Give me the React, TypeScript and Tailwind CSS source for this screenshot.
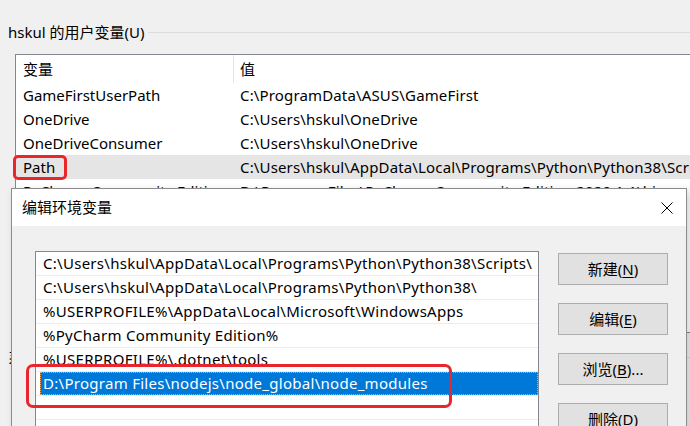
import React from 'react';

const userVars: [string, string][] = [
  ['GameFirstUserPath', 'C:\\ProgramData\\ASUS\\GameFirst'],
  ['OneDrive', 'C:\\Users\\hskul\\OneDrive'],
  ['OneDriveConsumer', 'C:\\Users\\hskul\\OneDrive'],
  ['Path', 'C:\\Users\\hskul\\AppData\\Local\\Programs\\Python\\Python38\\Scripts\\;C:\\Users\\hskul\\AppData\\Local\\Programs\\Python\\Python38\\'],
  ['PyCharm Community Edition', 'D:\\Program Files\\PyCharm Community Edition 2020.1.1\\bin;'],
  ['TEMP', 'C:\\Users\\hskul\\AppData\\Local\\Temp'],
  ['TMP', 'C:\\Users\\hskul\\AppData\\Local\\Temp'],
];

const pathEntries = [
  'C:\\Users\\hskul\\AppData\\Local\\Programs\\Python\\Python38\\Scripts\\',
  'C:\\Users\\hskul\\AppData\\Local\\Programs\\Python\\Python38\\',
  '%USERPROFILE%\\AppData\\Local\\Microsoft\\WindowsApps',
  '%PyCharm Community Edition%',
  '%USERPROFILE%\\.dotnet\\tools',
  'D:\\Program Files\\nodejs\\node_global\\node_modules',
  '',
  '',
];

const buttons: [string, string, string][] = [
  ['新建(', 'N', ')'],
  ['编辑(', 'E', ')'],
  ['浏览(', 'B', ')...'],
  ['删除(', 'D', ')'],
];

function MainWindow() {
  return (
    <div className="pt-[21px]">
      {/* group label */}
      <div className="flex h-[22px] items-center pl-[8px]">
        <span className="whitespace-nowrap leading-[22px]">hskul 的用户变量(U)</span>
        <div className="ml-[4px] h-px flex-1 bg-[#dcdcdc]" />
      </div>

      {/* list view */}
      <div className="ml-[15px] mt-[11px] h-[279px] overflow-hidden border border-r-0 border-[#828790] bg-white">
        <div className="flex h-[28px]">
          <div className="flex w-[218px] items-center border-r border-[#e5e5e5] pl-[7px]">变量</div>
          <div className="flex items-center pl-[6px]">值</div>
        </div>
        {userVars.map(([name, value]) => (
          <div
            key={name}
            className={`flex h-[24px] items-center whitespace-nowrap ${name === 'Path' ? 'bg-[#e5e5e5]' : ''}`}
          >
            <div className="w-[218px] shrink-0 overflow-hidden pl-[7px]">{name}</div>
            <div className="pl-[6px] tracking-[0.15px]">{value}</div>
          </div>
        ))}
      </div>

      {/* system vars group (mostly hidden) */}
      <div className="mt-[13px] flex h-[22px] items-center pl-[8px]">
        <span className="whitespace-nowrap leading-[22px]">系统变量(S)</span>
        <div className="ml-[4px] h-px flex-1 bg-[#dcdcdc]" />
      </div>
    </div>
  );
}

function EditDialog() {
  return (
    <div className="absolute left-[11px] top-[188px] h-[260px] w-[676px] border border-[#8c8c8c] bg-[#f0f0f0] shadow-[3px_3px_8px_rgba(0,0,0,0.18)]">
      <div className="flex h-[37px] items-center justify-between bg-white pl-[10px] pr-[13px]">
        <span className="leading-none">编辑环境变量</span>
        <svg width="12" height="12" viewBox="0 0 12 12" className="block">
          <path d="M0.5 0.5 L11.5 11.5 M11.5 0.5 L0.5 11.5" stroke="#000" strokeWidth="1" fill="none" />
        </svg>
      </div>

      <div className="flex pl-[23px] pt-[25px]">
        <div className="h-[200px] w-[504px] overflow-hidden border border-[#828790] bg-white tracking-[0.28px]">
          {pathEntries.map((entry, i) =>
            i === 5 ? (
              <div key={i} className="flex h-[24px] border-b border-[#ececec]">
                <div className="ml-[4px] flex flex-1 items-center whitespace-nowrap border border-dotted border-[#f0a860] bg-[#0078d7] pl-[2px] text-white">
                  {entry}
                </div>
              </div>
            ) : (
              <div key={i} className="flex h-[24px] items-center whitespace-nowrap border-b border-[#ececec] pl-[7px]">
                {entry}
              </div>
            )
          )}
        </div>

        <div className="ml-[19px] mt-[2px] flex flex-col gap-[18px]">
          {buttons.map(([pre, key, post]) => (
            <div
              key={key}
              className="flex h-[32px] w-[110px] items-center justify-center border border-[#adadad] bg-[#e1e1e1]"
            >
              {pre}
              <span className="underline underline-offset-2">{key}</span>
              {post}
            </div>
          ))}
        </div>
      </div>
    </div>
  );
}

export default function App() {
  return (
    <div className="relative h-[426px] w-[690px] overflow-hidden bg-[#f0f0f0] font-['Noto_Sans','Noto_Sans_CJK_SC',sans-serif] text-[15px] text-black">
      <MainWindow />
      <EditDialog />

      {/* red annotation boxes */}
      <div className="absolute left-[13px] top-[155px] h-[25px] w-[54px] rounded-[5px] border-[3px] border-[#e8262b]" />
      <div className="absolute left-[26px] top-[364px] h-[44px] w-[426px] rounded-[7px] border-[3px] border-[#e8262b]" />
    </div>
  );
}
